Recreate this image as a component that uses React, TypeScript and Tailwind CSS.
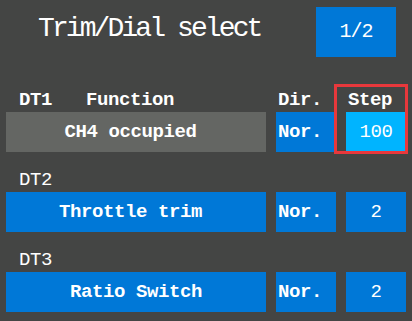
import React from 'react';

type Row = {
  id: string;
  fn: string;
  dir: string;
  step: string;
  active?: boolean;
};

const rows: Row[] = [
  { id: 'DT1', fn: 'CH4 occupied ', dir: 'Nor.', step: '100', active: true },
  { id: 'DT2', fn: 'Throttle trim ', dir: 'Nor.', step: '2' },
  { id: 'DT3', fn: 'Ratio Switch', dir: 'Nor.', step: '2' },
];

const mono = "font-['Liberation_Mono',monospace]";

const App: React.FC = () => {
  return (
    <div className={`w-[412px] h-[321px] bg-[#444544] text-white overflow-hidden ${mono}`}>
      {/* header */}
      <div className="flex h-[80px]">
        <h1 className="pl-[38px] pt-[13px] text-[28px] leading-[32px] tracking-[-2.9px] font-normal">Trim/Dial select</h1>
        <div className="ml-auto mr-[16px] mt-[7px] w-[80px] h-[50px] bg-[#0078d7] flex items-center justify-center text-[20px] tracking-[-1px]">1/2</div>
      </div>

      {rows.map((row) => (
        <div key={row.id} className="relative h-[80px]">
          <div className="grid grid-cols-[260px_60px_60px] gap-x-[10px] px-[6px] h-[32px] pt-[10px] text-[19px] leading-[20px] tracking-[-0.4px]">
            {row.active ? (
              <>
                <div className="flex font-bold">
                  <span className="pl-[13px]">{row.id}</span>
                  <span className="pl-[34px]">Function</span>
                </div>
                <span className="pl-[2px] font-bold">Dir.</span>
                <span className="pl-[2px] font-bold">Step</span>
              </>
            ) : (
              <span className="pl-[13px]">{row.id}</span>
            )}
          </div>
          <div className="grid grid-cols-[260px_60px_60px] gap-x-[10px] px-[6px] h-[40px] text-[19px] tracking-[-0.4px]">
            <div className={`flex items-center justify-center font-bold whitespace-pre ${row.active ? 'bg-[#646663]' : 'bg-[#0078d7]'}`}>{row.fn}</div>
            <div className="flex items-center pl-[2px] bg-[#0078d7] font-bold">{row.dir}</div>
            <div className={`flex items-center justify-center ${row.active ? 'bg-[#00b4ff]' : 'bg-[#0078d7]'}`}>{row.step}</div>
          </div>
          {row.active && (
            <div className="absolute left-[334px] top-[4px] w-[74px] h-[70px] border-[3px] border-[#e8383c]" />
          )}
        </div>
      ))}
    </div>
  );
};

export default App;
